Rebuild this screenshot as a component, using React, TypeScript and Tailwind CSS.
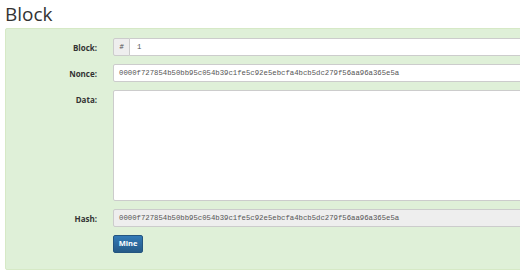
const HASH = '0000f727854b50bb95c054b39c1fe5c92e5ebcfa4bcb5dc279f56aa96a365e5a'

function Label({ children }: { children: string }) {
  return (
    <div className="w-[107px] shrink-0 pr-[16px] pt-[5px] text-right text-[8px] font-bold leading-[9px] text-[#333]">
      {children}
    </div>
  )
}

export default function App() {
  return (
    <div className="h-[272px] w-[520px] overflow-hidden bg-white pl-[5px] font-['Open_Sans',sans-serif]">
      <h1 className="h-[28px] pt-[1px] text-[19px] leading-[26px] text-[#333]">Block</h1>
      <div className="w-[600px] rounded-[2px] border border-[#d6e9c6] bg-[#dff0d8] pb-[16px] pt-[9px]">
        <div className="flex flex-col gap-[8px]">
          <div className="flex items-start">
            <Label>Block:</Label>
            <div className="flex h-[18px] flex-1">
              <div className="flex w-[17px] items-center justify-center rounded-l-[2px] border border-[#ccc] bg-[#eee] text-[7px] italic text-[#555]">
                #
              </div>
              <div className="flex flex-1 items-center rounded-r-[2px] border border-l-0 border-[#ccc] bg-white pl-[7px] font-['Liberation_Mono',monospace] text-[7.3px] text-[#555]">
                1
              </div>
            </div>
          </div>
          <div className="flex items-start">
            <Label>Nonce:</Label>
            <div className="flex h-[18px] flex-1 items-center rounded-[2px] border border-[#ccc] bg-white pl-[5px] font-['Liberation_Mono',monospace] text-[7.3px] text-[#555]">
              {HASH}
            </div>
          </div>
          <div className="flex items-start">
            <Label>Data:</Label>
            <div className="h-[111px] flex-1 rounded-[2px] border border-[#ccc] bg-white" />
          </div>
          <div className="flex items-start">
            <Label>Hash:</Label>
            <div className="flex h-[18px] flex-1 items-center rounded-[2px] border border-[#ccc] bg-[#eee] pl-[5px] font-['Liberation_Mono',monospace] text-[7.3px] text-[#555]">
              {HASH}
            </div>
          </div>
          <div className="flex">
            <div className="w-[107px] shrink-0" />
            <button className="h-[18px] w-[30px] rounded-[2px] border border-[#245580] bg-gradient-to-b from-[#337ab7] to-[#265a88] text-[7.5px] font-bold text-white">
              Mine
            </button>
          </div>
        </div>
      </div>
    </div>
  )
}
